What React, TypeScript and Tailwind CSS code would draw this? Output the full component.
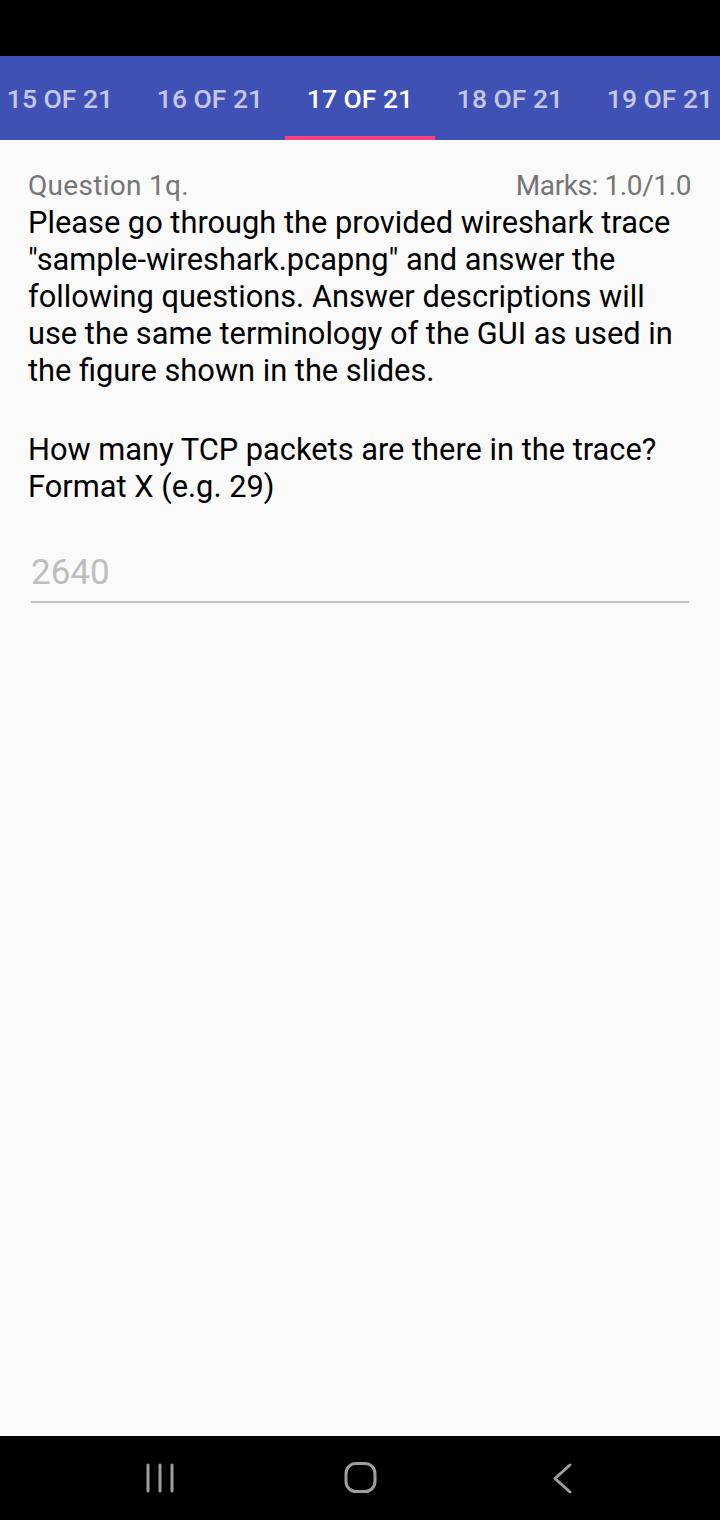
import { useState } from "react";

const tabs = ["15 OF 21", "16 OF 21", "17 OF 21", "18 OF 21", "19 OF 21"];

const intro = [
  "Please go through the provided wireshark trace",
  "\"sample-wireshark.pcapng\" and answer the",
  "following questions. Answer descriptions will",
  "use the same terminology of the GUI as used in",
  "the figure shown in the slides.",
];

export default function App() {
  const [active, setActive] = useState(2);
  const [answer, setAnswer] = useState("");

  return (
    <div
      className="w-[720px] h-[1520px] flex flex-col bg-[#fafafa] overflow-hidden"
      style={{ fontFamily: "Roboto, 'Liberation Sans', sans-serif" }}
    >
      {/* Status Bar */}
      <div className="h-[56px] bg-black shrink-0" />

      {/* Tabs */}
      <div className="h-[84px] bg-[#3f51b5] shrink-0 flex ml-[-15px]">
        {tabs.map((t, i) => (
          <button
            key={t}
            onClick={() => setActive(i)}
            className={`w-[150px] shrink-0 h-full flex flex-col items-center justify-center relative text-[26.5px] font-medium ${
              active === i ? "text-white" : "text-white/70"
            }`}
          >
            <span className="mt-[1px]">{t}</span>
            {active === i && (
              <div className="absolute bottom-0 left-0 right-0 h-[4px] bg-[#ff4081]" />
            )}
          </button>
        ))}
      </div>

      {/* Main Content */}
      <main className="flex-1 px-[28px] pt-[30px]">
        <div className="flex items-center justify-between text-[#757575] text-[28px] leading-[32px] pr-[1px]">
          <span className="tracking-[0.3px]">Question 1q.</span>
          <span className="tracking-[-0.4px]">Marks: 1.0/1.0</span>
        </div>
        <p className="text-black text-[30.8px] leading-[37px] mt-[2px] whitespace-nowrap">
          {intro.map((l) => (
            <span key={l} className="block">
              {l}
            </span>
          ))}
        </p>
        <p className="text-black text-[30.8px] leading-[37px] mt-[42px] whitespace-nowrap">
          How many TCP packets are there in the trace?
          <br />
          Format X (e.g. 29)
        </p>

        <div className="mt-[42px] mx-[3px] border-b-2 border-[#c4c4c4]">
          <input
            value={answer}
            onChange={(e) => setAnswer(e.target.value)}
            placeholder="2640"
            className="w-full bg-transparent text-[35px] leading-[44px] pt-[4px] pb-[6px] text-black placeholder-[#bdbdbd] focus:outline-none"
          />
        </div>
      </main>

      {/* Nav Bar */}
      <div className="h-[84px] bg-black shrink-0 flex items-center pl-[140px] gap-[161px]">
        <svg width="40" height="40" viewBox="0 0 40 40">
          <g stroke="#9e9e9e" strokeWidth="3" strokeLinecap="round">
            <line x1="8" y1="7" x2="8" y2="33" />
            <line x1="20" y1="7" x2="20" y2="33" />
            <line x1="32" y1="7" x2="32" y2="33" />
          </g>
        </svg>
        <svg width="40" height="40" viewBox="0 0 40 40">
          <rect x="5" y="5.5" width="29" height="28" rx="10" fill="none" stroke="#9e9e9e" strokeWidth="3" />
        </svg>
        <svg width="40" height="40" viewBox="0 0 40 40">
          <polyline points="28,7 13,20.5 28,34" fill="none" stroke="#9e9e9e" strokeWidth="3" strokeLinecap="round" strokeLinejoin="round" />
        </svg>
      </div>
    </div>
  );
}
